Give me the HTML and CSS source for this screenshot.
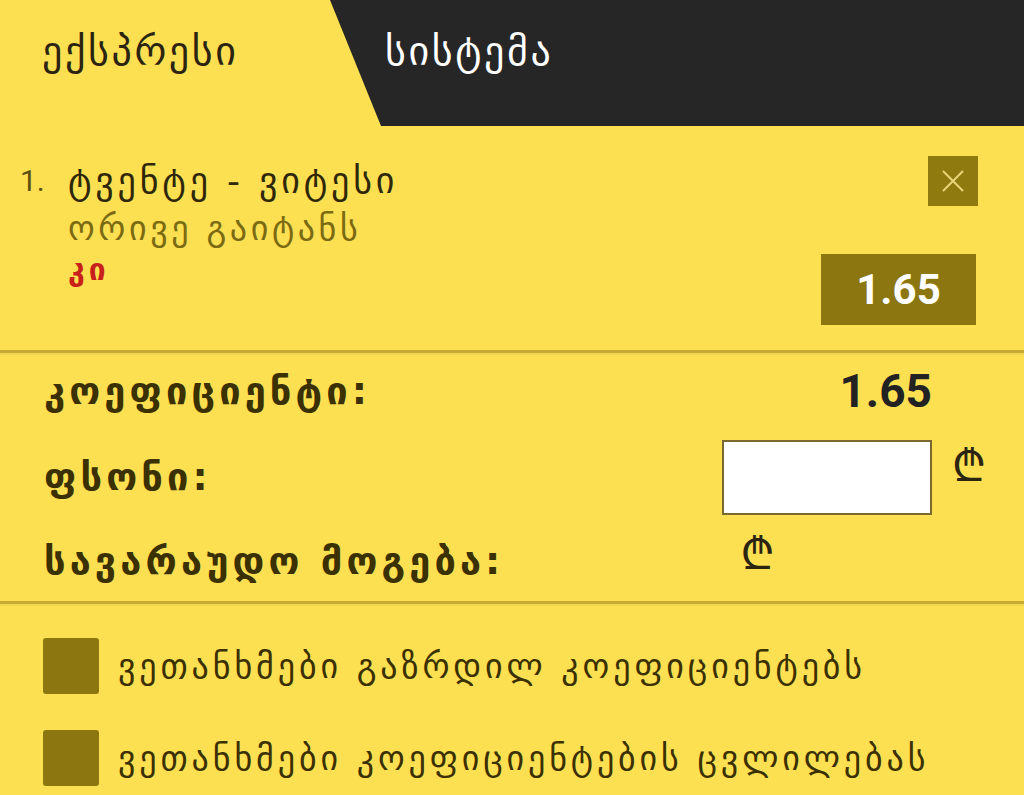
FILE: index.html
```html
<!DOCTYPE html>
<html lang="ka">
<head>
<meta charset="utf-8">
<link rel="stylesheet" href="styles.css">
</head>
<body>
<div class="page">
  <div class="tabs">
    <div class="tab tab-express">ექსპრესი</div>
    <div class="tab tab-system">სისტემა</div>
  </div>

  <div class="bet">
    <div class="bet-num">1.</div>
    <div class="bet-info">
      <div class="bet-title">ტვენტე - ვიტესი</div>
      <div class="bet-market">ორივე გაიტანს</div>
      <div class="bet-pick">კი</div>
    </div>
    <div class="bet-side">
      <div class="close-btn">
        <svg width="24" height="24" viewBox="0 0 24 24"><path d="M2 2 L22 22 M22 2 L2 22" stroke="#e8d57a" stroke-width="2" fill="none"/></svg>
      </div>
      <div class="odds-box">1.65</div>
    </div>
  </div>

  <div class="divider"></div>

  <div class="summary">
    <div class="sum-row row-coef">
      <div class="sum-label">კოეფიციენტი:</div>
      <div class="sum-value">1.65</div>
    </div>
    <div class="sum-row row-stake">
      <div class="sum-label">ფსონი:</div>
      <div class="stake-wrap">
        <div class="stake-input"></div>
        <span class="lari">₾</span>
      </div>
    </div>
    <div class="sum-row row-win">
      <div class="sum-label">სავარაუდო მოგება:</div>
      <span class="lari win-lari">₾</span>
    </div>
  </div>

  <div class="divider"></div>

  <div class="agree">
    <div class="agree-row"><span class="box"></span><span class="agree-text">ვეთანხმები გაზრდილ კოეფიციენტებს</span></div>
    <div class="agree-row"><span class="box"></span><span class="agree-text">ვეთანხმები კოეფიციენტების ცვლილებას</span></div>
  </div>
</div>
</body>
</html>
```

FILE: styles.css
```css
html, body {
  margin: 0;
  padding: 0;
  background: #fddf52;
}
body {
  font-family: "DejaVu Sans", "Noto Sans", sans-serif;
  color: #3a3000;
  width: 1024px;
  height: 795px;
  overflow: hidden;
}
.tabs {
  display: flex;
  height: 126px;
}
.tab {
  font-size: 40px;
  letter-spacing: 2.6px;
  display: flex;
  align-items: center;
  padding-bottom: 24px;
  box-sizing: border-box;
}
.tab-express {
  width: 330px;
  padding-left: 42px;
  color: #2a2410;
}
.tab-system {
  flex: 1;
  background: #262626;
  color: #ffffff;
  padding-left: 55px;
  clip-path: polygon(0 0, 100% 0, 100% 100%, 51px 100%);
}
.bet {
  display: flex;
  padding: 30px 48px 24px 20px;
  height: 224px;
  box-sizing: border-box;
}
.bet-num {
  font-family: "Roboto", sans-serif;
  font-size: 30px;
  color: #5c5110;
  width: 48px;
  line-height: 50px;
}
.bet-info {
  flex: 1;
}
.bet-title {
  font-size: 36px;
  letter-spacing: 3.8px;
  line-height: 50px;
  color: #2e2708;
}
.bet-market {
  font-size: 34px;
  letter-spacing: 3.6px;
  line-height: 44px;
  color: #7a6a12;
}
.bet-pick {
  font-size: 30px;
  letter-spacing: 4px;
  font-weight: bold;
  color: #c8201a;
  line-height: 40px;
}
.bet-side {
  display: flex;
  flex-direction: column;
  align-items: flex-end;
}
.close-btn {
  width: 50px;
  height: 50px;
  background: #8f7a10;
  display: flex;
  align-items: center;
  justify-content: center;
  margin-right: -2px;
}
.odds-box {
  margin-top: 48px;
  width: 155px;
  height: 71px;
  background: #8c7610;
  color: #ffffff;
  font-family: "Roboto", sans-serif;
  font-weight: bold;
  font-size: 42px;
  display: flex;
  align-items: center;
  justify-content: center;
}
.divider {
  height: 3px;
  background: #c6aa35;
  border-bottom: 2px solid #f2d650;
}
.summary {
  padding: 4px 92px 0 44px;
  height: 246px;
  box-sizing: border-box;
}
.sum-row {
  display: flex;
  align-items: center;
  justify-content: space-between;
}
.row-coef { height: 64px; }
.row-stake { height: 108px; }
.row-win { height: 60px; justify-content: flex-start; }
.sum-label {
  font-size: 38px;
  letter-spacing: 4.1px;
  font-weight: bold;
  color: #3a3000;
}
.sum-value {
  font-family: "Roboto", sans-serif;
  font-weight: bold;
  font-size: 46px;
  color: #222;
}
.stake-wrap {
  display: flex;
  align-items: center;
  position: relative;
}
.stake-input {
  width: 206px;
  height: 71px;
  background: #ffffff;
  border: 2px solid #7a6a30;
}
.lari {
  font-size: 44px;
  color: #2a2410;
}
.stake-wrap .lari {
  position: absolute;
  left: 230px;
  top: -6px;
}
.win-lari {
  margin-left: 236px;
  margin-top: -18px;
}
.agree {
  padding: 32px 0 0 43px;
}
.agree-row {
  display: flex;
  align-items: center;
  height: 56px;
  margin-bottom: 36px;
}
.box {
  width: 56px;
  height: 56px;
  background: #8c7610;
  border-radius: 3px;
  margin-right: 19px;
  flex: none;
}
.agree-text {
  font-size: 34px;
  letter-spacing: 3.9px;
  color: #3a3000;
}
```
